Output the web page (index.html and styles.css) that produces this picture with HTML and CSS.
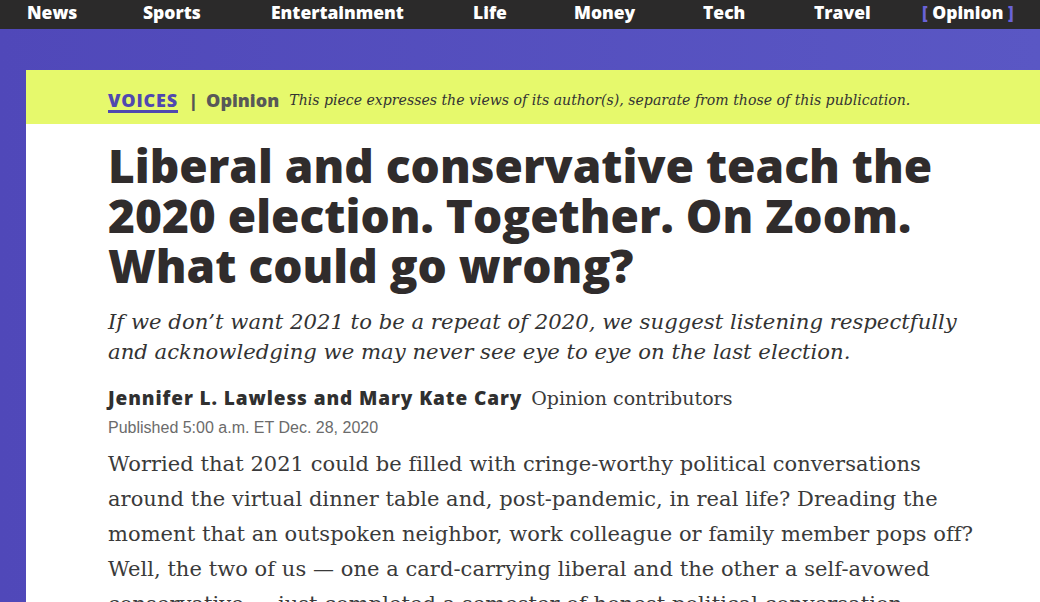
FILE: index.html
```html
<!DOCTYPE html>
<html>
<head>
<meta charset="utf-8">
<link rel="stylesheet" href="styles.css">
</head>
<body>
<nav class="topnav">
  <a class="nav-item">News</a>
  <a class="nav-item">Sports</a>
  <a class="nav-item">Entertainment</a>
  <a class="nav-item">Life</a>
  <a class="nav-item">Money</a>
  <a class="nav-item">Tech</a>
  <a class="nav-item">Travel</a>
  <a class="nav-item nav-active"><span class="bracket">[</span> Opinion <span class="bracket">]</span></a>
</nav>
<main class="stage">
  <article class="card">
    <div class="voices-band">
      <span class="voices">VOICES</span>
      <span class="sep">|</span>
      <span class="opinion">Opinion</span>
      <span class="disclaimer">This piece expresses the views of its author(s), separate from those of this publication.</span>
    </div>
    <div class="content">
      <h1 class="headline">Liberal and conservative teach the 2020 election. Together. On Zoom. What could go wrong?</h1>
      <p class="dek">If we don’t want 2021 to be a repeat of 2020, we suggest listening respectfully and acknowledging we may never see eye to eye on the last election.</p>
      <div class="byline"><span class="authors">Jennifer L. Lawless and Mary Kate Cary</span> <span class="role">Opinion contributors</span></div>
      <div class="published">Published 5:00 a.m. ET Dec. 28, 2020</div>
      <p class="body-text">Worried that 2021 could be filled with cringe-worthy political conversations around the virtual dinner table and, post-pandemic, in real life? Dreading the moment that an outspoken neighbor, work colleague or family member pops off? Well, the two of us — one a card-carrying liberal and the other a self-avowed conservative — just completed a semester of honest political conversation.</p>
    </div>
  </article>
</main>
</body>
</html>
```

FILE: styles.css
```css
html, body {
  margin: 0;
  padding: 0;
  height: 100%;
  overflow: hidden;
}
body {
  background: #5650bf;
  font-family: "Open Sans", "Lato", sans-serif;
}
.topnav {
  height: 29px;
  background: #2b2a2a;
  display: flex;
  align-items: center;
  padding-left: 27px;
  box-sizing: border-box;
}
.nav-item {
  color: #ffffff;
  font-weight: 800;
  font-size: 17.5px;
  line-height: 22px;
  margin-top: -6px;
}
.nav-item:nth-child(1) { width: 116px; }
.nav-item:nth-child(2) { width: 128px; }
.nav-item:nth-child(3) { width: 202px; }
.nav-item:nth-child(4) { width: 101px; }
.nav-item:nth-child(5) { width: 129px; }
.nav-item:nth-child(6) { width: 111px; }
.nav-item:nth-child(7) { width: 108px; }
.bracket {
  color: #6a62d8;
}
.stage {
  padding: 41px 0 0 26px;
  background: linear-gradient(90deg, #5048b9 0%, #5a57c4 100%);
  height: 100%;
  box-sizing: border-box;
}
.card {
  background: #ffffff;
  height: 100%;
  overflow: hidden;
}
.voices-band {
  background: #e6f96c;
  height: 54px;
  display: flex;
  align-items: center;
  padding-left: 82px;
  padding-top: 5px;
  box-sizing: border-box;
}
.voices {
  color: #5048b0;
  font-weight: 800;
  font-size: 18px;
  border-bottom: 3px solid #5048b0;
  line-height: 20px;
  margin-top: 3px;
  letter-spacing: 0.8px;
}
.sep {
  color: #555555;
  font-weight: 800;
  font-size: 18px;
  margin: 0 8px 0 11px;
}
.opinion {
  color: #585858;
  font-weight: 800;
  font-size: 18px;
  margin-right: 10px;
}
.disclaimer {
  font-family: "DejaVu Serif", Georgia, serif;
  font-style: italic;
  font-size: 14.1px;
  color: #333333;
}
.content {
  padding: 16px 0 0 82px;
}
.headline {
  margin: 0;
  font-family: "Open Sans", sans-serif;
  font-weight: 800;
  font-size: 46px;
  line-height: 50px;
  color: #302c2c;
  width: 880px;
  letter-spacing: 0;
}
.dek {
  margin: 17px 0 0 0;
  font-family: "DejaVu Serif", Georgia, serif;
  font-style: italic;
  font-size: 21.2px;
  line-height: 30px;
  color: #333333;
  width: 870px;
}
.byline {
  margin-top: 19px;
  font-size: 19px;
  line-height: 24px;
  color: #303030;
}
.authors {
  font-weight: 800;
  letter-spacing: 0.9px;
}
.role {
  font-family: "DejaVu Serif", Georgia, serif;
  font-size: 19px;
  color: #3a3a3a;
  margin-left: 4px;
}
.published {
  margin-top: 9px;
  font-family: "Liberation Sans", Arial, sans-serif;
  font-size: 16px;
  color: #6b6b6b;
}
.body-text {
  margin: 10px 0 0 0;
  font-family: "DejaVu Serif", Georgia, serif;
  font-size: 21px;
  line-height: 35px;
  color: #3a3a3a;
  width: 880px;
  letter-spacing: 0.05px;
}
```
